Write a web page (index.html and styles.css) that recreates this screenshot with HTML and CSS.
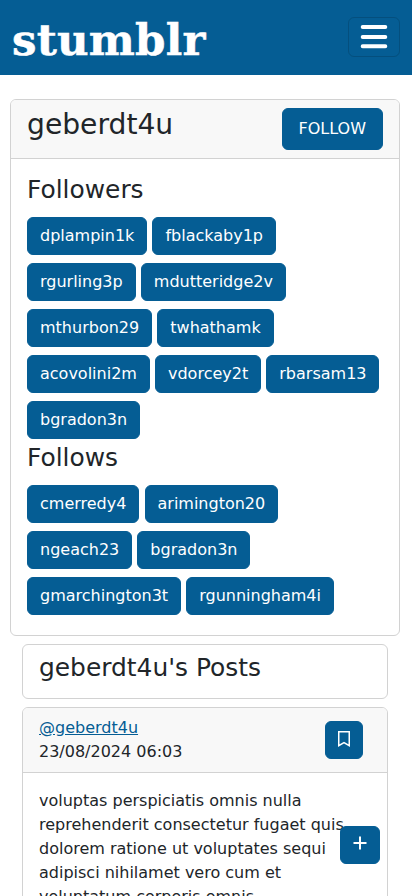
FILE: index.html
```html
<!DOCTYPE html>
<html lang="en">
<head>
<meta charset="utf-8">
<meta name="viewport" content="width=device-width, initial-scale=1">
<title>stumblr</title>
<link rel="stylesheet" href="styles.css">
</head>
<body>
<nav class="navbar">
  <a class="brand">stumblr</a>
  <button class="toggler" aria-label="Menu">
    <svg width="30" height="30" viewBox="0 0 30 30" fill="none" stroke="#fff" stroke-width="4" stroke-linecap="round"><path d="M3.700 5h22.600M3.700 14.900h22.600M3.700 24.300h22.600"/></svg>
  </button>
</nav>
<main>
  <section class="card profile">
    <header class="card-header profile-header">
      <h1>geberdt4u</h1>
      <button class="btn follow">FOLLOW</button>
    </header>
    <div class="card-body">
      <h2>Followers</h2>
      <div class="people">
        <a class="btn">dplampin1k</a>
        <a class="btn">fblackaby1p</a>
        <a class="btn">rgurling3p</a>
        <a class="btn">mdutteridge2v</a>
        <a class="btn">mthurbon29</a>
        <a class="btn">twhathamk</a>
        <a class="btn">acovolini2m</a>
        <a class="btn">vdorcey2t</a>
        <a class="btn">rbarsam13</a>
        <a class="btn">bgradon3n</a>
      </div>
      <h2>Follows</h2>
      <div class="people">
        <a class="btn">cmerredy4</a>
        <a class="btn">arimington20</a>
        <a class="btn">ngeach23</a>
        <a class="btn">bgradon3n</a>
        <a class="btn">gmarchington3t</a>
        <a class="btn">rgunningham4i</a>
      </div>
    </div>
  </section>
  <section class="posts">
    <div class="card posts-title"><h2>geberdt4u's Posts</h2></div>
    <article class="card">
      <header class="card-header post-header">
        <div><a class="author" href="#">@geberdt4u</a><br>23/08/2024 06:03</div>
        <button class="btn bookmark" aria-label="Bookmark">
          <svg width="12" height="16" viewBox="0 0 12 16" fill="none" stroke="#fff" stroke-width="1.5"><path d="M.75.75h10.500v13.900L6 11.500.75 14.650z"/></svg>
        </button>
      </header>
      <div class="card-body">voluptas perspiciatis omnis nulla reprehenderit consectetur fugaet quis dolorem ratione ut voluptates sequi adipisci nihilamet vero cum et voluptatum corporis omnis</div>
    </article>
  </section>
</main>
<button class="btn compose" aria-label="New post">
  <svg width="14" height="14" viewBox="0 0 14 14" stroke="#fff" stroke-width="2"><path d="M.5 7h13M7 .5v13"/></svg>
</button>
</body>
</html>
```

FILE: styles.css
```css
* { box-sizing: border-box; }
html { height: 100%; overflow: hidden; }
body {
  margin: 0;
  height: 100%;
  overflow: hidden;
  background: #fff;
  color: #212529;
  font: 16px/24px "DejaVu Sans", sans-serif;
}
.navbar {
  height: 75px;
  padding: 0 12px;
  display: flex;
  align-items: center;
  justify-content: space-between;
  background: #055d94;
}
.brand {
  padding-top: 5px;
  font: bold 43.500px/52px "DejaVu Serif", serif;
  letter-spacing: .2px;
  color: #fff;
  -webkit-text-stroke: .5px #fff;
}
.toggler {
  width: 52px;
  height: 40px;
  margin-bottom: 1px;
  padding: 0;
  display: flex;
  align-items: center;
  justify-content: center;
  border: 1px solid rgba(0, 0, 0, .15);
  border-radius: 6px;
  background: none;
}
main { padding: 24px 12px 0 10px; }
.card {
  border: 1px solid #d2d2d2;
  border-radius: 6px;
  margin-bottom: 8px;
  background: #fff;
}
.profile { width: 390px; }
.card-header {
  padding: 8px 16px;
  border-bottom: 1px solid #d2d2d2;
  border-radius: 5px 5px 0 0;
  background: #f8f8f8;
  display: flex;
  justify-content: space-between;
}
.card-body { padding: 16px; }
h1, h2 { margin: 0 0 8px; font-weight: 400; line-height: 1.2; }
h1 { font-size: 28.18px; }
h2 { font-size: 24.908px; }
.btn {
  display: inline-block;
  margin: 4px 0;
  padding: 6px 12px;
  border: 1px solid #055d94;
  border-radius: 6px;
  background: #055d94;
  color: #fff;
  font: inherit;
  vertical-align: middle;
}
.follow { margin: 0; padding: 8px 16px; }
.posts { padding-left: 12px; width: 378px; }
.posts-title { height: 55px; padding: 8px 16px; }
.post-header { align-items: center; }
.bookmark {
  width: 38px;
  height: 38px;
  margin: 0 8px 0 0;
  padding: 0 0 2px;
  display: flex;
  align-items: center;
  justify-content: center;
}
.author { color: #055d94; }
.compose {
  position: fixed;
  right: 32px;
  bottom: 32px;
  width: 40px;
  height: 38px;
  margin: 0;
  padding: 0 0 4px;
  display: flex;
  align-items: center;
  justify-content: center;
}
```
